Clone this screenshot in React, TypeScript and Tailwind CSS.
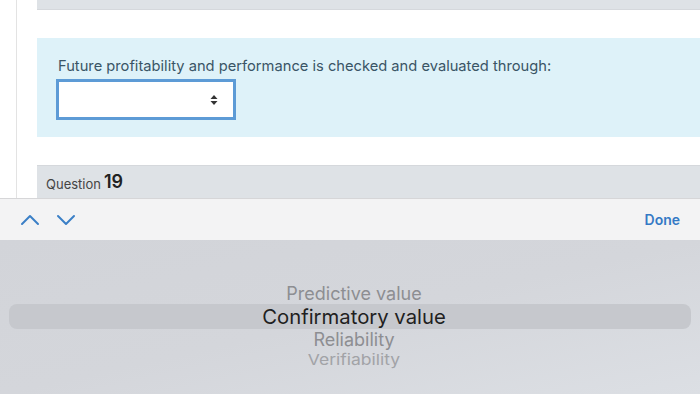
import React from 'react'

const font = { fontFamily: 'Inter, "Noto Sans", sans-serif' }

function SortIcon() {
  return (
    <svg width="8" height="12" viewBox="0 0 8 12" className="text-[#333]">
      <path d="M4 1 L7.5 5 H0.5 Z" fill="currentColor" />
      <path d="M4 11 L7.5 7 H0.5 Z" fill="currentColor" />
    </svg>
  )
}

function Chevron({ up }: { up?: boolean }) {
  return (
    <svg width="20" height="12" viewBox="0 0 20 12" fill="none">
      <path
        d={up ? 'M2 10 L10 2 L18 10' : 'M2 2 L10 10 L18 2'}
        stroke="#3b7fc6"
        strokeWidth="2"
        strokeLinecap="round"
        strokeLinejoin="round"
      />
    </svg>
  )
}

export default function App() {
  const items = ['Predictive value', 'Confirmatory value', 'Reliability', 'Verifiability']

  return (
    <div className="h-[394px] w-[700px] overflow-hidden bg-white" style={font}>
      {/* Page content */}
      <div className="h-[198px] pl-4">
        <div className="h-full border-l border-[#e3e3e3] pl-5">
          <div className="h-[10px] bg-[#dee2e6] border-b border-[#d5d8dc]" />

          <div className="mt-[28px] h-[99px] bg-[#def2f9] pl-[19px] pt-[18px]">
            <p className="ml-[2px] text-[14.7px] leading-[20px] text-[#3a5566]">
              Future profitability and performance is checked and evaluated through:
            </p>
            <div className="mt-[3px] flex h-[41px] w-[180px] items-center justify-end border-[3px] border-[#5d9bd6] bg-white pr-[15px]">
              <SortIcon />
            </div>
          </div>

          <div className="mt-[28px] flex h-[33px] items-end bg-[#dee2e6] pb-[5px] pl-[9px] border-t border-[#d5d8dc]">
            <span className="text-[13px] leading-[18px] text-[#444]">Question</span>
            <span className="ml-[3px] text-[18px] font-semibold leading-[22px] text-[#222]">19</span>
          </div>
        </div>
      </div>

      {/* Keyboard toolbar */}
      <div className="flex h-[42px] items-center border-t border-[#d6d6d8] bg-[#f3f3f4] pl-[20px] pr-[20px]">
        <div className="flex items-center gap-[16px]">
          <Chevron up />
          <Chevron />
        </div>
        <span className="ml-auto text-[14px] font-semibold text-[#3479c5]">Done</span>
      </div>

      {/* Picker wheel */}
      <div className="h-[154px] bg-gradient-to-br from-[#d2d4d9] via-[#d4d6db] to-[#dcdfe4] px-[9px] pt-[43px]">
        <div className="relative">
          <div className="absolute left-0 right-0 top-[21px] h-[25px] rounded-lg bg-[#c6c8cd]" />
          <div className="relative ml-[8px] flex flex-col items-center">
            <span className="h-[21px] text-[18px] leading-[21px] text-[#8d8e92]">{items[0]}</span>
            <span className="h-[25px] text-[20.3px] leading-[25px] text-[#1f1f21]">{items[1]}</span>
            <span className="h-[21px] text-[18px] leading-[21px] text-[#8d8e92]">{items[2]}</span>
            <span className="h-[20px] scale-y-[0.85] text-[17.5px] leading-[20px] text-[#a2a3a7]">
              {items[3]}
            </span>
          </div>
        </div>
      </div>
    </div>
  )
}
